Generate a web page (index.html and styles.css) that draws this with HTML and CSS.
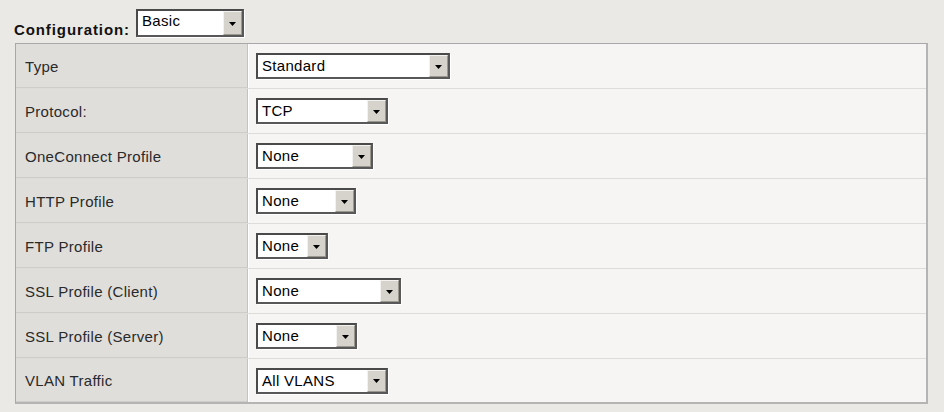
FILE: index.html
```html
<!DOCTYPE html>
<html>
<head>
<meta charset="utf-8">
<link rel="stylesheet" href="styles.css">
</head>
<body>
<div class="page">
  <div class="config">
    <span class="config-label">Configuration:</span>
    <div class="select select-basic"><span class="val val-top">Basic</span><span class="btn"><svg width="7" height="4" viewBox="0 0 7 4"><path d="M0 0H7L3.5 4Z" fill="#000"/></svg></span></div>
  </div>
  <div class="props">
    <div class="row"><div class="lab">Type</div><div class="cell"><div class="select" style="width:194px"><span class="val">Standard</span><span class="btn"><svg width="7" height="4" viewBox="0 0 7 4"><path d="M0 0H7L3.5 4Z" fill="#000"/></svg></span></div></div></div>
    <div class="row"><div class="lab">Protocol:</div><div class="cell"><div class="select" style="width:132px"><span class="val">TCP</span><span class="btn"><svg width="7" height="4" viewBox="0 0 7 4"><path d="M0 0H7L3.5 4Z" fill="#000"/></svg></span></div></div></div>
    <div class="row"><div class="lab">OneConnect Profile</div><div class="cell"><div class="select" style="width:117px"><span class="val">None</span><span class="btn"><svg width="7" height="4" viewBox="0 0 7 4"><path d="M0 0H7L3.5 4Z" fill="#000"/></svg></span></div></div></div>
    <div class="row"><div class="lab">HTTP Profile</div><div class="cell"><div class="select" style="width:100px"><span class="val">None</span><span class="btn"><svg width="7" height="4" viewBox="0 0 7 4"><path d="M0 0H7L3.5 4Z" fill="#000"/></svg></span></div></div></div>
    <div class="row"><div class="lab">FTP Profile</div><div class="cell"><div class="select" style="width:72px"><span class="val">None</span><span class="btn"><svg width="7" height="4" viewBox="0 0 7 4"><path d="M0 0H7L3.5 4Z" fill="#000"/></svg></span></div></div></div>
    <div class="row"><div class="lab">SSL Profile (Client)</div><div class="cell"><div class="select" style="width:145px"><span class="val">None</span><span class="btn"><svg width="7" height="4" viewBox="0 0 7 4"><path d="M0 0H7L3.5 4Z" fill="#000"/></svg></span></div></div></div>
    <div class="row"><div class="lab">SSL Profile (Server)</div><div class="cell"><div class="select" style="width:101px"><span class="val">None</span><span class="btn"><svg width="7" height="4" viewBox="0 0 7 4"><path d="M0 0H7L3.5 4Z" fill="#000"/></svg></span></div></div></div>
    <div class="row"><div class="lab">VLAN Traffic</div><div class="cell"><div class="select" style="width:132px"><span class="val">All VLANS</span><span class="btn"><svg width="7" height="4" viewBox="0 0 7 4"><path d="M0 0H7L3.5 4Z" fill="#000"/></svg></span></div></div></div>
  </div>
</div>
</body>
</html>
```

FILE: styles.css
```css
html, body {
  margin: 0;
  padding: 0;
  background: #ebe9e5;
}
.page {
  padding: 9px 0 0 15px;
  width: 914px;
  font-family: "Liberation Sans", Arial, sans-serif;
  font-size: 15px;
  color: #222;
}
.config {
  display: flex;
  align-items: flex-start;
  height: 34px;
}
.config-label {
  font-weight: bold;
  font-size: 15px;
  line-height: 17px;
  letter-spacing: 0.9px;
  color: #111;
  margin-left: -1px;
  width: 122px;
  padding-top: 12px;
  white-space: nowrap;
}
.select {
  display: flex;
  box-sizing: border-box;
  height: 26px;
  background: #fff;
  border: 2px solid #4a4a4a;
  border-right-color: #585858;
  border-bottom-color: #585858;
  box-shadow: 1px 1px 0 #fff;
  flex: none;
}
.select-basic {
  width: 108px;
  height: 28px;
}
.val {
  flex: 1;
  padding-left: 4px;
  line-height: 22px;
  font-size: 15px;
  letter-spacing: 0.3px;
  color: #000;
  white-space: nowrap;
  overflow: hidden;
}
.val-top {
  line-height: 19px;
}
.btn {
  width: 19px;
  box-sizing: border-box;
  background: #d6d3cc;
  border-top: 1px solid #f4f2ee;
  border-left: 1px solid #f4f2ee;
  border-right: 1px solid #9a978f;
  border-bottom: 1px solid #9a978f;
  display: flex;
  align-items: center;
  justify-content: center;
}
.btn svg {
  display: block;
  margin-top: 1px;
}
.props {
  border-top: 1px solid #a8a8a8;
  border-left: 1px solid #a8a8a8;
  border-right: 2px solid #b4b4b4;
  border-bottom: 2px solid #b4b4b4;
  background: #f6f5f3;
  width: 910px;
}
.row {
  display: flex;
  height: 44px;
  border-bottom: 1px solid #dedcd8;
}
.row:last-child {
  border-bottom: none;
  height: 43px;
}
.lab {
  width: 222px;
  flex: none;
  background: #dfdedb;
  border-right: 1px solid #c4c3c0;
  padding-left: 9px;
  display: flex;
  align-items: center;
  font-size: 15px;
  letter-spacing: 0.3px;
  color: #2a2a2a;
  white-space: nowrap;
}
.row .lab {
  box-shadow: inset 0 -1px 0 #cfcdc9;
}
.cell {
  flex: 1;
  border-left: 1px solid #ffffff;
  padding-left: 7px;
  display: flex;
  align-items: center;
}
```
